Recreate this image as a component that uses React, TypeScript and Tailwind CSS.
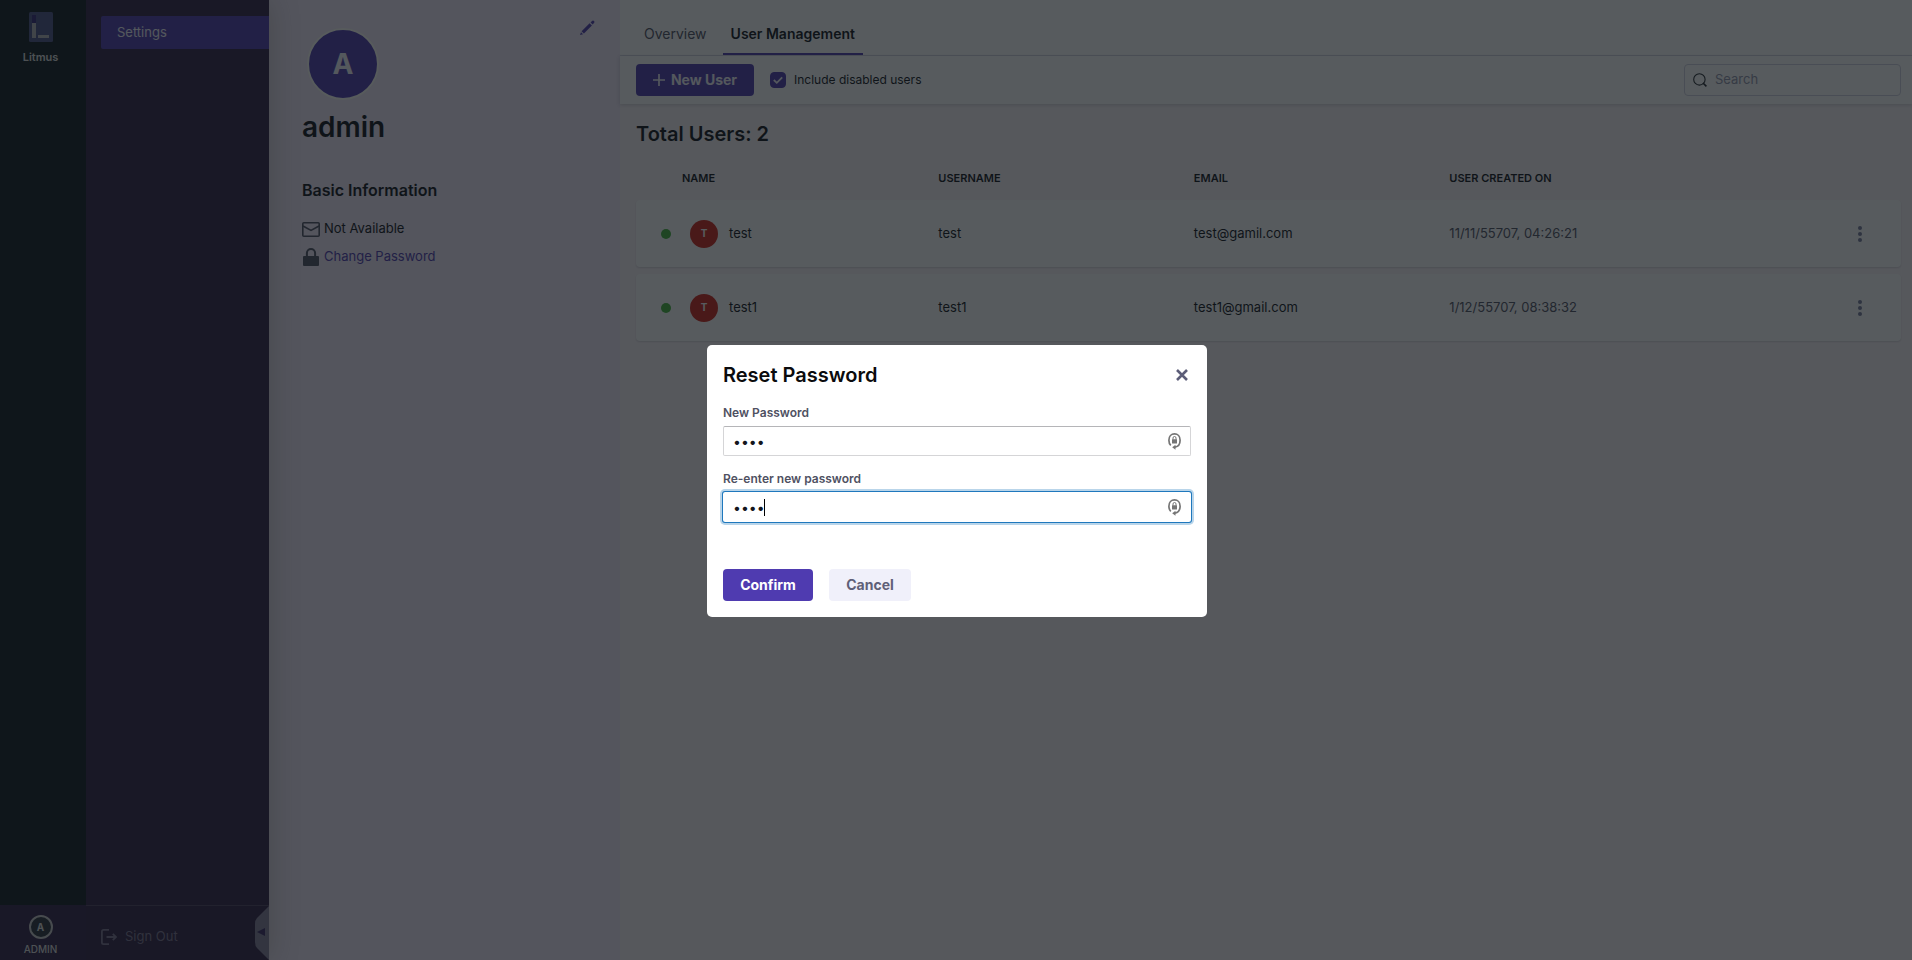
import { useState } from "react";

const users = [
  { name: "test", username: "test", email: "test@gamil.com", created: "11/11/55707, 04:26:21" },
  { name: "test1", username: "test1", email: "test1@gmail.com", created: "1/12/55707, 08:38:32" },
];

function LitmusLogo() {
  return (
    <svg width="24" height="30" viewBox="0 0 24 30" aria-hidden="true">
      <rect width="24" height="30" rx="1.5" fill="#4b5285" />
      <rect x="3" y="3" width="4" height="8" fill="#34267a" />
      <rect x="3" y="11" width="4" height="15" fill="#b4b4ba" />
      <rect x="9" y="23" width="11" height="3" fill="#b4b4ba" />
    </svg>
  );
}

function SignOutIcon() {
  return (
    <svg width="16" height="16" viewBox="0 0 16 16" fill="none" stroke="currentColor" strokeWidth="1.8" aria-hidden="true">
      <path d="M8 0.9H2.5Q0.9 0.9 0.9 2.5V13.5Q0.9 15.1 2.5 15.1H8" />
      <path d="M5.5 8H15M11.8 4.8L15 8L11.8 11.2" />
    </svg>
  );
}

function PencilIcon() {
  return (
    <svg width="16" height="16" viewBox="0 0 16 16" fill="currentColor" aria-hidden="true">
      <path d="M11.6 2.5 13 1.1a1.4 1.4 0 0 1 2 2l-1.4 1.5zM10.6 3.3l2.3 2.3-8 8-2.3-2.3zM2 12.2l2 2L1 15z" />
    </svg>
  );
}

function MailIcon() {
  return (
    <svg width="18" height="15" viewBox="0 0 18 15" fill="none" stroke="currentColor" strokeWidth="1.6" aria-hidden="true">
      <rect x="0.8" y="0.8" width="16.4" height="13.4" rx="1" />
      <path d="M1 4 9 8.4 17 4" />
    </svg>
  );
}

function LockIcon() {
  return (
    <svg width="16" height="18" viewBox="0 0 16 18" aria-hidden="true">
      <rect y="8" width="16" height="10" rx="1" fill="currentColor" />
      <path d="M3.9 9V5.1a4.1 4.1 0 0 1 8.2 0V9" fill="none" stroke="currentColor" strokeWidth="2" />
    </svg>
  );
}

function SearchIcon() {
  return (
    <svg width="14" height="14" viewBox="0 0 14 14" fill="none" stroke="currentColor" strokeWidth="1.1" aria-hidden="true">
      <circle cx="6.4" cy="6.4" r="5.7" />
      <path d="M10 10 13.4 13.4" strokeWidth="1.6" />
    </svg>
  );
}

function KeeperIcon() {
  return (
    <svg width="13" height="17" viewBox="0 0 13 17" fill="none" stroke="#757575" aria-hidden="true">
      <path d="M2.8 12.4C1.5 11.2 0.9 9.3 0.9 7.2C0.9 3.4 3.4 0.9 6.5 0.9C9.6 0.9 12.1 3.4 12.1 7.2C12.1 11.2 9.8 13.6 7 14.1" strokeWidth="1.7" />
      <path d="M7.5 11.7V16.8L4.2 14.2z" fill="#757575" stroke="none" />
      <rect x="4" y="6.2" width="5" height="4.4" rx="0.4" fill="#757575" stroke="none" />
      <path d="M5 6.6V5a1.5 1.5 0 0 1 3 0V6.6" strokeWidth="1" />
    </svg>
  );
}

function SideNav() {
  return (
    <div className="relative z-10 flex shrink-0 shadow-[0_0_28px_rgba(60,60,20,0.25)]">
      <nav aria-label="Modules" className="flex w-[86px] flex-col justify-between bg-[#0f1a20]">
        <a href="#litmus" className="flex w-[81px] flex-col items-center gap-[7px] pt-3 text-[11px] leading-4 font-semibold text-[#dcdcdc]">
          <LitmusLogo />
          Litmus
        </a>
        <a href="#admin" className="flex h-[55px] flex-col items-center bg-[#2f1f47] pt-2.5 pr-[5px] text-[10px] leading-3 font-medium text-[#dcdcdc]">
          <span className="mb-1 flex size-6 items-center justify-center rounded-full border-2 border-[#c8c8c8] bg-[#28313a] font-bold">A</span>
          ADMIN
        </a>
      </nav>
      <nav aria-label="Project" className="flex w-[183px] flex-col justify-between bg-[#2f1f43]">
        <a href="#settings" className="mt-4 ml-[15px] flex h-[33px] items-center rounded-l-xs bg-[#4f3bb0] pl-4 text-[13px] text-[#f3f3fa]">
          Settings
        </a>
        <div className="flex h-[55px] items-stretch justify-between border-t border-[#4d4260] pl-[15px] text-[#7d7390]">
          <button type="button" className="flex items-center gap-2 pt-2 text-[13px]">
            <SignOutIcon />
            Sign Out
          </button>
          <button type="button" aria-label="Collapse navigation">
            <svg width="14" height="54" viewBox="0 0 14 54" aria-hidden="true">
              <path d="M14 0 2 12Q0 14 0 18V36Q0 40 2 42L14 54z" fill="#85809c" />
              <path d="M10 22V30L2 26z" fill="#392762" />
            </svg>
          </button>
        </div>
      </nav>
    </div>
  );
}

function Profile() {
  return (
    <aside className="flex w-[351px] shrink-0 flex-col bg-[#f3e9fa] px-[33px] pt-[28px] text-[#101318]">
      <div className="flex items-start justify-between">
        <div className="ml-[5px] flex size-[72px] items-center justify-center rounded-full border-2 border-[#fdfdf8] bg-[#4f3bb0] text-[28px] font-bold text-[#f3f3fa]">
          A
        </div>
        <button type="button" aria-label="Edit profile" className="-mt-2 -mr-2 text-[#4f3bb0]">
          <PencilIcon />
        </button>
      </div>
      <h1 className="mt-[7px] text-[28px] leading-10 font-semibold">admin</h1>
      <h2 className="mt-[31px] text-base leading-6 font-semibold">Basic Information</h2>
      <p className="mt-[15px] flex h-6 items-center gap-1 text-[13px]">
        <span className="text-[#4f5162]"><MailIcon /></span>
        Not Available
      </p>
      <a href="#password" className="mt-1 flex h-6 items-center gap-[5px] pl-px text-[13px] text-[#4f3bb0]">
        <span className="text-[#4f5162]"><LockIcon /></span>
        Change Password
      </a>
    </aside>
  );
}

function UserTable() {
  return (
    <table className="w-full table-fixed border-separate border-spacing-x-0 border-spacing-y-[7px] text-left text-[13px] text-[#101318]">
      <colgroup>
        <col className="w-[23.9%]" />
        <col className="w-[20.2%]" />
        <col className="w-[20.2%]" />
        <col />
        <col className="w-[100px]" />
      </colgroup>
      <thead>
        <tr className="h-[38px] text-[11px]">
          <th className="pt-2 pl-[46px] font-semibold">NAME</th>
          <th className="pt-2 font-semibold">USERNAME</th>
          <th className="pt-2 font-semibold">EMAIL</th>
          <th className="pt-2 font-semibold">USER CREATED ON</th>
          <th aria-label="Actions" />
        </tr>
      </thead>
      <tbody>
        {users.map((u) => (
          <tr key={u.name} className="h-[67px] rounded-sm bg-white shadow-[0_1px_2px_rgba(40,41,61,0.16)]">
            <td className="rounded-l-sm pl-[25px]">
              <div className="flex items-center">
                <span className="size-2.5 rounded-full bg-[#43b53a]" />
                <span className="mr-[11px] ml-[19px] flex size-7 items-center justify-center rounded-full bg-[#cf2318] text-[10px] font-bold text-white">T</span>
                {u.name}
              </div>
            </td>
            <td>{u.username}</td>
            <td>{u.email}</td>
            <td className="text-[#4f5162]">{u.created}</td>
            <td className="rounded-r-sm">
              <button type="button" aria-label={`Options for ${u.name}`} className="ml-[53px] flex w-3 justify-center text-[#77799a]">
                <svg width="4" height="16" viewBox="0 0 4 16" fill="currentColor" aria-hidden="true">
                  <circle cx="2" cy="2" r="2" />
                  <circle cx="2" cy="8" r="2" />
                  <circle cx="2" cy="14" r="2" />
                </svg>
              </button>
            </td>
          </tr>
        ))}
      </tbody>
    </table>
  );
}

function Main() {
  const [include, setInclude] = useState(true);
  return (
    <main className="flex min-w-0 flex-1 flex-col bg-[#fcf5f9]">
      <div className="flex h-14 items-end gap-2 border-b border-[#d9dae6] bg-white pl-4 text-sm">
        <a href="#overview" className="flex h-10 items-center px-2 pb-0.5 text-[#4f5162]">Overview</a>
        <a href="#users" className="flex h-10 items-center border-b-2 border-[#4f3bb0] px-2 font-semibold text-[#101318]">
          User Management
        </a>
      </div>
      <div className="flex h-12 shrink-0 items-center bg-white pr-[11px] pl-4 shadow-[0_1px_4px_rgba(40,41,61,0.2)]">
        <button type="button" className="flex h-8 w-[118px] items-center justify-center gap-1.5 rounded-sm bg-[#4f3bb0] text-sm font-bold text-[#f3f3fa]">
          <svg width="12" height="12" viewBox="0 0 12 12" stroke="currentColor" strokeWidth="1.7" aria-hidden="true">
            <path d="M6 0V12M0 6H12" />
          </svg>
          New User
        </button>
        <label className="ml-4 flex items-center gap-2 text-xs text-[#101318]">
          <span className="relative flex size-4">
            <input
              type="checkbox"
              checked={include}
              onChange={(e) => setInclude(e.target.checked)}
              className="peer size-4 appearance-none rounded-sm border border-[#4f3bb0] checked:bg-[#4f3bb0]"
            />
            <svg className="pointer-events-none absolute inset-0 hidden peer-checked:block" width="16" height="16" viewBox="0 0 16 16" fill="none" stroke="#f3f3fa" strokeWidth="1.8" aria-hidden="true">
              <path d="M3.8 8 6.8 10.8 12.2 5.4" />
            </svg>
          </span>
          Include disabled users
        </label>
        <label className="ml-auto flex h-8 w-[217px] items-center gap-2 rounded-sm border border-[#d0d0e0] pl-2 text-[#22272d]">
          <SearchIcon />
          <input type="search" placeholder="Search" aria-label="Search" className="min-w-0 flex-1 bg-transparent text-[13px] outline-none placeholder:text-[#9293ab]" />
        </label>
      </div>
      <section className="pt-4 pr-[11px] pl-4">
        <h2 className="text-xl leading-7 font-semibold text-[#101318]">Total Users: 2</h2>
        <UserTable />
      </section>
    </main>
  );
}

function PasswordField({ id, label, focused = false }: { id: string; label: string; focused?: boolean }) {
  const [value, setValue] = useState("test");
  return (
    <div>
      <label htmlFor={id} className="block text-xs leading-4 font-semibold text-[#4f5162]">{label}</label>
      <div
        className={
          focused
            ? "relative mt-[5px] flex h-[30px] items-center rounded-xs pr-2.5 shadow-[0_0_0_1px_#1f78bd,0_0_0_3px_#b9d5ea]"
            : "relative mt-[5px] flex h-[30px] items-center rounded-xs border border-[#d5d5d7] border-t-[#b5b5b8] pr-[9px]"
        }
      >
        <input
          id={id}
          type="password"
          value={value}
          onChange={(e) => setValue(e.target.value)}
          className={focused ? "h-full min-w-0 flex-1 pl-2.5 text-sm text-[#14161c] outline-none" : "h-full min-w-0 flex-1 pl-[9px] text-sm text-[#14161c] outline-none"}
        />
        {focused && <span className="absolute left-[41px] h-[17px] w-px bg-black" />}
        <KeeperIcon />
      </div>
    </div>
  );
}

function ResetPassword() {
  return (
    <div className="fixed inset-0 z-20 flex items-center justify-center bg-[rgba(16,22,26,0.7)] pt-0.5 pl-0.5">
      <form role="dialog" aria-label="Reset Password" onSubmit={(e) => e.preventDefault()} className="w-[500px] rounded-[5px] bg-white p-4">
        <div className="flex h-7 items-center justify-between">
          <h2 className="text-xl font-semibold text-[#0b0b0d]">Reset Password</h2>
          <button type="button" aria-label="Close" className="mr-[3px] text-[#5c5d78]">
            <svg width="12" height="12" viewBox="0 0 12 12" stroke="currentColor" strokeWidth="2.6" aria-hidden="true">
              <path d="M1 1 11 11M11 1 1 11" />
            </svg>
          </button>
        </div>
        <div className="mt-4 flex flex-col gap-[15px]">
          <PasswordField id="new-password" label="New Password" />
          <PasswordField id="confirm-password" label="Re-enter new password" focused />
        </div>
        <div className="mt-[47px] flex gap-4 text-sm font-bold">
          <button type="submit" className="h-8 min-w-[90px] rounded-sm bg-[#4f3bb0] px-4 text-white">Confirm</button>
          <button type="button" className="h-8 min-w-[82px] rounded-sm bg-[#f0f0fa] px-4 text-[#5f6078]">Cancel</button>
        </div>
      </form>
    </div>
  );
}

export default function App() {
  return (
    <div className="flex min-h-screen font-['Inter',sans-serif]">
      <SideNav />
      <Profile />
      <Main />
      <ResetPassword />
    </div>
  );
}
